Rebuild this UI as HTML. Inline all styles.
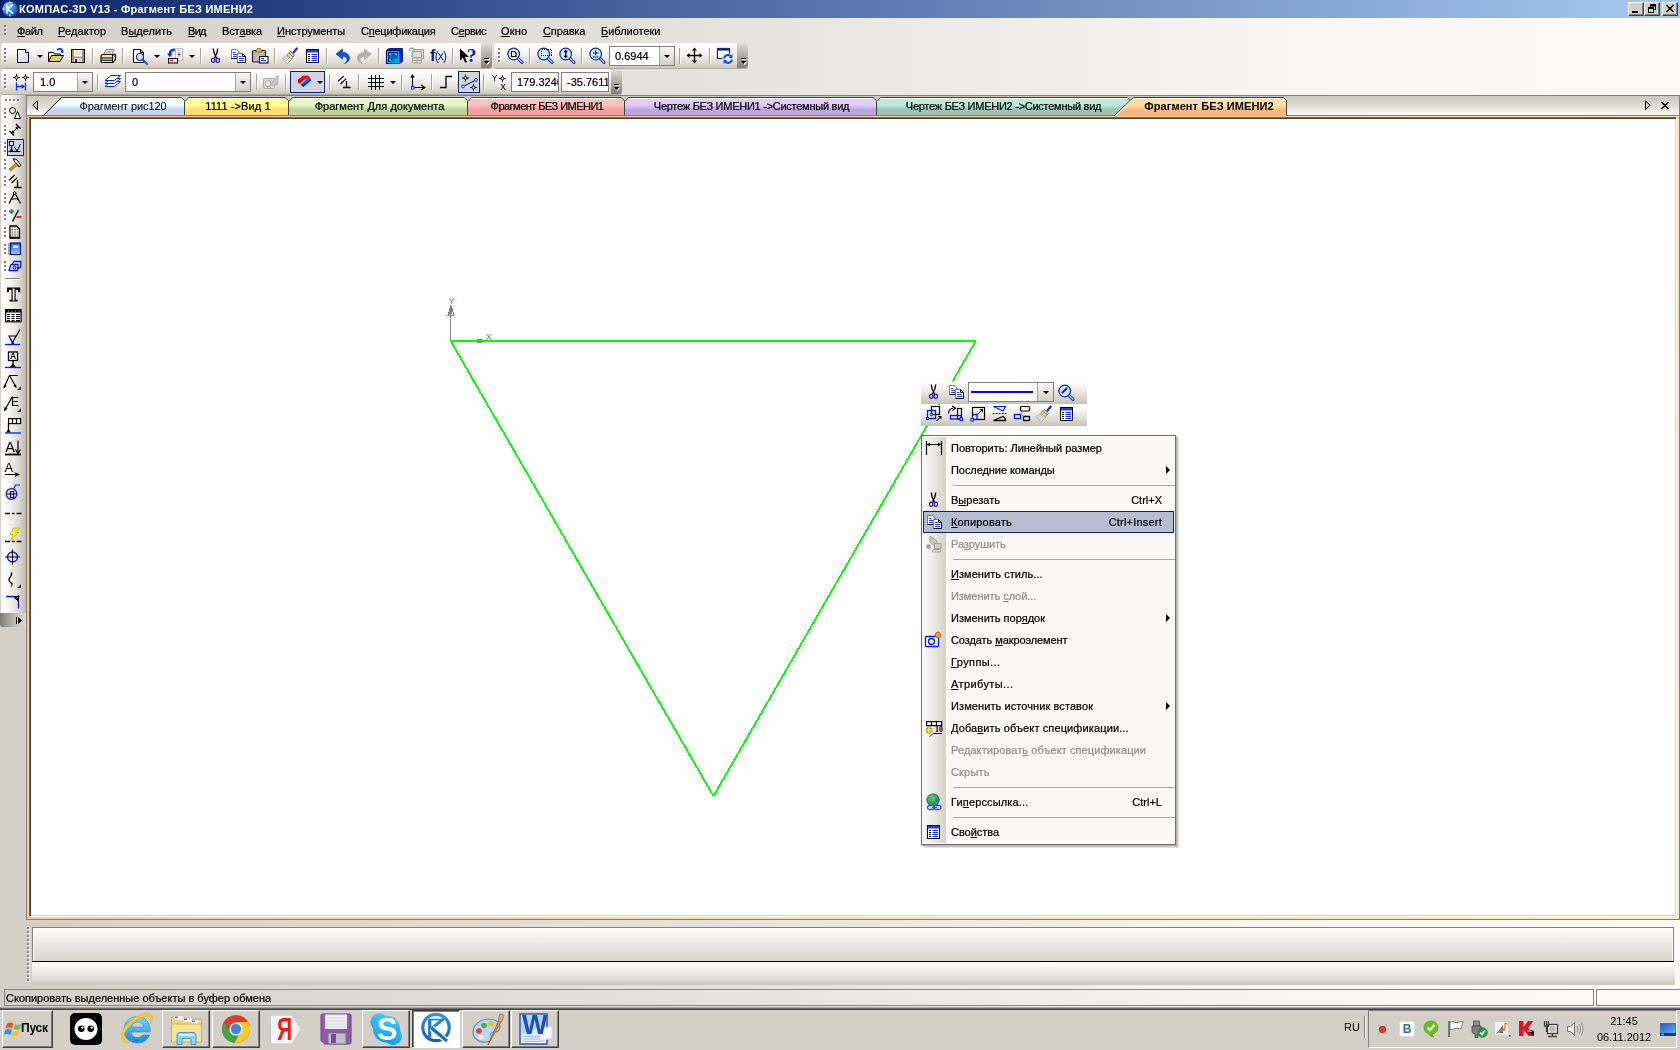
<!DOCTYPE html>
<html lang="ru">
<head>
<meta charset="utf-8">
<title>КОМПАС-3D V13 - Фрагмент БЕЗ ИМЕНИ2</title>
<style>
*{box-sizing:border-box;margin:0;padding:0}
html,body{width:1680px;height:1050px;overflow:hidden;background:#d4d0c8}
body{position:relative;font-family:"Liberation Sans","DejaVu Sans",sans-serif;font-size:11px;color:#000;line-height:13px}
.abs{position:absolute}
.mi,.ci,.ck,.tabt,.cap,.combo span,#stxt,.abs{will-change:transform}
.mi,.ci,.ck,.tabt,.combo span,#stxt{-webkit-text-stroke:.22px currentColor}
svg{position:absolute;overflow:visible;display:block}
u{text-decoration:underline;text-underline-offset:1px}
/* title bar */
#title{position:absolute;left:0;top:0;width:1680px;height:18px;background:linear-gradient(90deg,#0a246a 0%,#a6caf0 100%)}
#title .cap{position:absolute;left:19px;top:2px;color:#fff;font-weight:bold;font-size:11px;line-height:14px;white-space:nowrap;letter-spacing:0.24px}
.tbtn{position:absolute;top:2px;width:16px;height:14px;background:#d4d0c8;border:1px solid;border-color:#fff #404040 #404040 #fff;box-shadow:inset -1px -1px 0 #808080}
/* menubar & toolbar zone */
#zone{position:absolute;left:0;top:18px;width:1680px;height:989px;background:linear-gradient(90deg,#d4d0c8 0%,#e6e4df 45%,#f6f5f3 75%,#fbfaf9 100%)}
.mi{position:absolute;top:25px;font-size:11px;line-height:13px;white-space:nowrap}
.tb{position:absolute;height:25px;box-shadow:0 1px 0 #aca89d;border-radius:3px 3px 3px 3px;background:linear-gradient(180deg,#fff 0%,#fdfdfc 15%,#f3f2ef 45%,#e1ded7 75%,#cdc9bf 100%)}
.tb .ov{position:absolute;right:0;top:0;width:11px;height:25px;border-radius:0 3px 3px 0;background:linear-gradient(180deg,#e0ddd6 0%,#a8a49a 60%,#808080 100%)}
.grip{position:absolute;width:2px}
.sep{position:absolute;width:2px;height:16px;border-left:1px solid #a6a398;border-right:1px solid #fff}
.combo{position:absolute;height:20px;background:#fff;border:1px solid #808080}
.combo span{position:absolute;left:6px;top:3px;font-size:11px;line-height:13px}
.combo i{position:absolute;right:0;top:0;width:15px;height:18px;background:linear-gradient(180deg,#f8f7f5,#d4d0c8);border-left:1px solid #a6a398}
.arr{position:absolute;width:0;height:0;border-left:3px solid transparent;border-right:3px solid transparent;border-top:3px solid #000}
</style>
</head>
<body>
<!-- ===== title bar ===== -->
<div id="title">
<svg style="left:2px;top:1px;width:16px;height:16px" viewBox="0 0 16 16"><defs><radialGradient id="kg" cx="35%" cy="30%" r="75%"><stop offset="0" stop-color="#8fd0ff"/><stop offset="0.6" stop-color="#2c86d8"/><stop offset="1" stop-color="#0f4fa0"/></radialGradient></defs><circle cx="8" cy="8" r="7.6" fill="url(#kg)"/><path d="M5.2 3.5v9M10.8 3.6 5.6 8l5.4 4.6" fill="none" stroke="#fff" stroke-width="1.6"/><path d="M8 0.6v2M8 13.4v2M0.6 8h2" stroke="#fff" stroke-width="1"/></svg>
<div class="cap">КОМПАС-3D V13 - Фрагмент БЕЗ ИМЕНИ2</div>
<div class="tbtn" style="left:1628px"><svg style="left:3px;top:8px;width:6px;height:2px" viewBox="0 0 6 2"><rect width="6" height="2" fill="#000"/></svg></div>
<div class="tbtn" style="left:1644px"><svg style="left:2px;top:1px;width:10px;height:10px" viewBox="0 0 10 10"><path d="M3.5 1h5v4.5M3.5 2h5" fill="none" stroke="#000" stroke-width="1"/><rect x="3" y="0" width="6" height="2" fill="#000"/><rect x="8" y="0" width="1" height="6" fill="#000"/><rect x="3" y="0" width="1" height="3" fill="#000"/><rect x="7" y="5" width="2" height="1" fill="#000"/><rect x="1" y="3" width="6" height="2" fill="#000"/><rect x="1" y="3" width="1" height="6" fill="#000"/><rect x="6" y="3" width="1" height="6" fill="#000"/><rect x="1" y="8" width="6" height="1" fill="#000"/></svg></div>
<div class="tbtn" style="left:1662px"><svg style="left:3px;top:2px;width:8px;height:7px" viewBox="0 0 8 7"><path d="M0.5 0l7 7M7.5 0l-7 7" stroke="#000" stroke-width="1.6" fill="none"/></svg></div>
</div>

<!-- ===== menu / toolbar zone ===== -->
<div id="zone"></div>
<!-- menu grip -->
<svg style="left:4px;top:25px;width:3px;height:11px" viewBox="0 0 3 11"><g fill="#fff"><rect x="1" y="1" width="2" height="2"/><rect x="1" y="5" width="2" height="2"/><rect x="1" y="9" width="2" height="2"/></g><g fill="#808080"><rect x="0" y="0" width="2" height="2"/><rect x="0" y="4" width="2" height="2"/><rect x="0" y="8" width="2" height="2"/></g></svg>
<div class="mi" style="left:17px;letter-spacing:-0.400px"><u>Ф</u>айл</div>
<div class="mi" style="left:58px;letter-spacing:0.112px"><u>Р</u>едактор</div>
<div class="mi" style="left:121px;letter-spacing:0.025px">В<u>ы</u>делить</div>
<div class="mi" style="left:188px;letter-spacing:-0.700px"><u>В</u>ид</div>
<div class="mi" style="left:222px;letter-spacing:-0.129px">Вст<u>а</u>вка</div>
<div class="mi" style="left:277px;letter-spacing:-0.036px"><u>И</u>нструменты</div>
<div class="mi" style="left:361px;letter-spacing:-0.233px">С<u>п</u>ецификация</div>
<div class="mi" style="left:451px;letter-spacing:-0.417px">С<u>е</u>рвис</div>
<div class="mi" style="left:501px;letter-spacing:0.225px"><u>О</u>кно</div>
<div class="mi" style="left:543px;letter-spacing:-0.129px"><u>С</u>правка</div>
<div class="mi" style="left:601px;letter-spacing:-0.010px"><u>Б</u>иблиотеки</div>
<!-- ===== toolbar row 1, bar A ===== -->
<div class="tb" style="left:1px;top:43px;width:491px"><div class="ov"></div></div>
<svg style="left:484px;top:58px;width:7px;height:8px" viewBox="0 0 7 8"><path d="M1 1.5h5" stroke="#fff" stroke-width="1"/><path d="M0 0.5h5" stroke="#000" stroke-width="1"/><path d="M1 4h5l-2.5 3z" fill="#fff"/><path d="M0 3h5l-2.5 3z" fill="#000"/></svg>
<svg class="g4" style="left:4px;top:48px;width:3px;height:15px" viewBox="0 0 3 15"><g fill="#fff"><rect x="1" y="1" width="2" height="2"/><rect x="1" y="5" width="2" height="2"/><rect x="1" y="9" width="2" height="2"/><rect x="1" y="13" width="2" height="2"/></g><g fill="#808080"><rect x="0" y="0" width="2" height="2"/><rect x="0" y="4" width="2" height="2"/><rect x="0" y="8" width="2" height="2"/><rect x="0" y="12" width="2" height="2"/></g></svg>
<!-- new -->
<svg style="left:16px;top:48px;width:16px;height:16px" viewBox="0 0 16 16"><defs><linearGradient id="pg" x1="0" y1="0" x2="1" y2="1"><stop offset="0" stop-color="#fff"/><stop offset="1" stop-color="#c4d4f0"/></linearGradient></defs><path d="M1.5 1.5h8l3 3v10h-11z" fill="url(#pg)" stroke="#000"/><path d="M9.5 1.5v3h3" fill="#fff" stroke="#000"/></svg>
<div class="arr" style="left:37px;top:55px"></div>
<!-- open -->
<svg style="left:48px;top:47px;width:16px;height:16px" viewBox="0 0 16 16"><path d="M0.5 14.5v-9h5l1 1.5h6v2" fill="#f4f0b0" stroke="#000"/><path d="M0.5 14.500l3-6h12l-3.500 6z" fill="#d8d070" stroke="#000"/><path d="M9 3c2.500-2 5-1.500 5.500 1.500" fill="none" stroke="#0030ff" stroke-width="1.800"/><path d="M12.300 3.800h3.600l-1.600 2.800z" fill="#0030ff"/></svg>
<!-- save -->
<svg style="left:70px;top:48px;width:16px;height:16px" viewBox="0 0 16 16"><rect x="1.500" y="1.500" width="13" height="13" fill="#b89048" stroke="#000"/><rect x="4" y="2" width="8" height="6.500" fill="#fff"/><path d="M5 4h6M5 6h6" stroke="#c0c0c0" stroke-width="1"/><rect x="4" y="10" width="8" height="4" fill="#c8d8f0"/><rect x="5" y="11" width="2" height="3" fill="#203040"/></svg>
<div class="sep" style="left:92px;top:48px"></div>
<!-- print -->
<svg style="left:100px;top:48px;width:17px;height:16px" viewBox="0 0 17 16"><path d="M3.500 7l2.500-5.500h7.500l-1.500 5.500z" fill="#fff" stroke="#606060" stroke-width=".8"/><path d="M6.500 3.300h5M6 5h5" stroke="#909090" stroke-width="1"/><path d="M1 8.500c0-1.300 1-2 2.500-2h8.500l3.500 0.500 0 4.500-2.500 3h-11c-.7 0-1-.4-1-1z" fill="#ece8b4" stroke="#000" stroke-width="1.100"/><path d="M12.500 7v7.200M12.500 7l3-1" stroke="#000" stroke-width=".9" fill="none"/><path d="M1.200 10h11.300M1.200 12.200h11.300" stroke="#000" stroke-width="1.100"/><path d="M13.500 9.500l1.500-1.500M13.500 12.500l1.500-1.500" stroke="#707030" stroke-width=".8"/></svg>
<div class="sep" style="left:122px;top:48px"></div>
<!-- preview -->
<svg style="left:132px;top:48px;width:17px;height:17px" viewBox="0 0 17 17"><path d="M1.500 1.500h7l3 3v10h-10z" fill="#fff" stroke="#000"/><path d="M8.500 1.500v3h3" fill="none" stroke="#000"/><circle cx="8" cy="9" r="3.500" fill="#d0e4ff" stroke="#203880" stroke-width="1.200"/><path d="M10.500 11.500l4.500 4.500" stroke="#3050b0" stroke-width="2.200" stroke-linecap="round"/></svg>
<div class="arr" style="left:154px;top:55px"></div>
<!-- print-setup -->
<svg style="left:167px;top:47px;width:17px;height:17px" viewBox="0 0 17 17"><rect x="8.500" y="1.500" width="7" height="12" fill="#f4f4f4" stroke="#808080" stroke-dasharray="1 1"/><path d="M12 3v9" stroke="#808080" stroke-dasharray="1 1"/><path d="M12 6v3M10.500 7.500h3" stroke="#404040" stroke-width=".8"/><path d="M2.800 7.500c0-3.500 2-4.800 5-4.800" fill="none" stroke="#0030ff" stroke-width="2.600"/><path d="M0 6.500h5.600l-2.800 3.800z" fill="#0030ff"/><rect x="1.500" y="11.500" width="9" height="4.500" fill="#e8e8e8" stroke="#000"/><rect x="3" y="12.500" width="3" height="1.500" fill="#ff2020"/></svg>
<div class="arr" style="left:189px;top:55px"></div>
<div class="sep" style="left:200px;top:48px"></div>
<!-- cut -->
<svg style="left:208px;top:48px;width:16px;height:16px" viewBox="0 0 16 16"><path d="M5.300 0.500c0 3.500 1.200 6.500 3.200 9.500M9.700 0.500c0 3.500-1.200 6.500-3.200 9.500" fill="none" stroke="#000" stroke-width="1.300"/><ellipse cx="5.200" cy="12.300" rx="1.700" ry="2.100" fill="none" stroke="#2810a8" stroke-width="1.200"/><ellipse cx="9.800" cy="12.300" rx="1.700" ry="2.100" fill="none" stroke="#2810a8" stroke-width="1.200"/></svg>
<!-- copy -->
<svg style="left:231px;top:49px;width:16px;height:16px" viewBox="0 0 16 16"><path d="M0.500 0.500h5l2.500 2.500v6.500h-7.500z" fill="#fff" stroke="#707070" stroke-width=".9"/><path d="M0.500 9.500h7.500v-6" fill="none" stroke="#000" stroke-width=".9"/><path d="M2 3.500h2.500M2 5.500h4M2 7.500h4" stroke="#0030ff" stroke-width=".9"/><path d="M6.500 4.500h5l3 3v6h-8z" fill="#fff" stroke="#707070" stroke-width=".9"/><path d="M6.500 13.500h8v-6l-3-3v3h3" fill="none" stroke="#000" stroke-width=".9"/><path d="M8 7.500h2.500M8 9.500h5M8 11.500h5" stroke="#0030ff" stroke-width=".9"/></svg>
<!-- paste -->
<svg style="left:252px;top:47px;width:17px;height:17px" viewBox="0 0 17 17"><rect x="0.500" y="3.500" width="13" height="11.500" rx="1" fill="#b4b2ac" stroke="#202020" stroke-width="1.100"/><path d="M2 13.500l10-9M2 9l5-4.500M6 14l6.500-5.500" stroke="#d8d6d0" stroke-width="1"/><path d="M3.500 5l2-3.500h3l2 3.500z" fill="#f0c030" stroke="#805800" stroke-width=".8"/><rect x="7.500" y="9.500" width="8.500" height="6.500" fill="#fff" stroke="#000" stroke-width="1"/><path d="M9 11.500h3M9 13.500h5" stroke="#0030ff" stroke-width="1.100"/></svg>
<div class="sep" style="left:274px;top:48px"></div>
<!-- brush -->
<svg style="left:282px;top:47px;width:17px;height:17px" viewBox="0 0 17 17"><path d="M11.500 5.500l3.300-4" stroke="#2030b0" stroke-width="2.200" stroke-linecap="round"/><path d="M8.500 4.500l4 3.500-1.500 2-4-3.500z" fill="#a8d4fa" stroke="#3858c0" stroke-width=".7"/><path d="M6.500 6l4.500 4-1.700 2.300-4.500-4z" fill="#f6e840" stroke="#807010" stroke-width=".7"/><path d="M4.800 8.300l4.500 4-4 4.500-5-5z" fill="#fff" stroke="#909090" stroke-width=".7"/><path d="M1.500 11l4.500 4.500M2.800 10l4.500 4.500M4 9l4.500 4.500M1.500 13l5-4.500M3 14.500l5-4.500" stroke="#a8a8a8" stroke-width=".6"/></svg>
<!-- properties -->
<svg style="left:305px;top:48px;width:16px;height:16px" viewBox="0 0 16 16"><rect x="1.500" y="1.500" width="12" height="13" fill="#fff" stroke="#000"/><rect x="2" y="2" width="11" height="2.500" fill="#2040d0"/><path d="M3 6.500h2M3 8.500h2M3 10.500h2M3 12.500h2" stroke="#000" stroke-width="1.200"/><path d="M6.500 6.500h5.500M6.500 8.500h5.500M6.500 10.500h5.500M6.500 12.500h5.500" stroke="#0030ff" stroke-width="1.200"/></svg>
<div class="sep" style="left:326px;top:48px"></div>
<!-- undo -->
<svg style="left:335px;top:48px;width:16px;height:16px" viewBox="0 0 16 16"><path d="M1 6l6.500-5v3.200c4 0 7 2.500 7 6 0 2.500-2 4.500-5 5.300 2-1.300 2.500-2.500 2.500-4 0-2-1.500-3.300-4.500-3.300v3z" fill="#1450e0" stroke="#0a30a0" stroke-width=".6"/></svg>
<!-- redo (disabled) -->
<svg style="left:356px;top:48px;width:16px;height:16px" viewBox="0 0 16 16"><path d="M15 6l-6.500-5v3.200c-4 0-7 2.500-7 6 0 2.500 2 4.500 5 5.300-2-1.300-2.500-2.500-2.500-4 0-2 1.500-3.300 4.500-3.300v3z" fill="#b4b2ac" stroke="#a09e98" stroke-width=".6"/></svg>
<div class="sep" style="left:378px;top:48px"></div>
<!-- library manager -->
<svg style="left:386px;top:48px;width:17px;height:16px" viewBox="0 0 17 16"><path d="M0.500 2.500l2.500-2h13.500v13l-3 2z" fill="#0818e0" stroke="#000870" stroke-width=".8"/><rect x="0.500" y="2.500" width="13" height="13" fill="#00e0f8" stroke="#000880" stroke-width="1.100"/><rect x="2.500" y="4.500" width="9" height="3.500" fill="#00e0f8" stroke="#000880" stroke-width="1.100"/><rect x="2.500" y="10" width="9" height="3.500" fill="#00e0f8" stroke="#000880" stroke-width="1.100"/><path d="M5 6.300h4M5 11.800h4" stroke="#000880" stroke-width="1.100"/></svg>
<!-- disabled icon -->
<svg style="left:408px;top:47px;width:17px;height:17px" viewBox="0 0 17 17"><rect x="6.500" y="2.500" width="9" height="9" fill="#d8d6d0" stroke="#a8a6a0"/><rect x="4.500" y="4.500" width="9" height="9" fill="#dcdad4" stroke="#a8a6a0"/><path d="M4.500 10.500h9M4.500 13.500h9M4.500 16h9M4.500 10.500v5.500M9 10.500v5.500M13.500 10.500v5.500" stroke="#a8a6a0" fill="none"/><path d="M1.500 3.500c0-3 4.500-3 4.500-.5 0 1.500-2 1.500-2 3.500M4 8v1.500" fill="none" stroke="#a8a6a0" stroke-width="1.600"/></svg>
<!-- f(x) -->
<div class="abs" style="left:430px;top:47px;width:20px;height:18px;color:#10209c;white-space:nowrap;line-height:18px"><b style="font-size:17px;letter-spacing:-1px">f</b><span style="font-size:12px;letter-spacing:-0.8px;position:relative;top:-1px">(x)</span></div>
<div class="sep" style="left:452px;top:48px"></div>
<!-- help cursor -->
<svg style="left:459px;top:47px;width:18px;height:18px" viewBox="0 0 18 18"><path d="M1 1.500v12l3-2.800 2.200 5 1.800-.8-2.200-4.900h4.200z" fill="#000"/></svg>
<div class="abs" style="left:467px;top:46px;font-size:19px;line-height:20px;font-weight:bold;color:#10209c;font-family:'Liberation Serif',serif">?</div>
<!-- ===== toolbar row 1, bar B (zoom) ===== -->
<div class="tb" style="left:494px;top:43px;width:254px"><div class="ov"></div></div>
<svg style="left:741px;top:58px;width:7px;height:8px" viewBox="0 0 7 8"><path d="M1 1.500h5" stroke="#fff" stroke-width="1"/><path d="M0 0.500h5" stroke="#000" stroke-width="1"/><path d="M1 4h5l-2.500 3z" fill="#fff"/><path d="M0 3h5l-2.500 3z" fill="#000"/></svg>
<svg style="left:498px;top:48px;width:3px;height:15px" viewBox="0 0 3 15"><g fill="#fff"><rect x="1" y="1" width="2" height="2"/><rect x="1" y="5" width="2" height="2"/><rect x="1" y="9" width="2" height="2"/><rect x="1" y="13" width="2" height="2"/></g><g fill="#808080"><rect x="0" y="0" width="2" height="2"/><rect x="0" y="4" width="2" height="2"/><rect x="0" y="8" width="2" height="2"/><rect x="0" y="12" width="2" height="2"/></g></svg>
<!-- zoom window -->
<svg style="left:507px;top:47px;width:17px;height:17px" viewBox="0 0 17 17"><circle cx="6.700" cy="7" r="5.800" fill="#d4ecff" stroke="#1830a0" stroke-width="1.300"/><path d="M11.500 11.800l3.500 3.500" stroke="#2038a0" stroke-width="3.200" stroke-linecap="round"/><path d="M11.500 11.800l3.500 3.500" stroke="#a4c4f0" stroke-width="1.300" stroke-linecap="round"/><path d="M4.500 4.500h3l1.500 1.500v3.500h-4.500z" fill="#fff" stroke="#000" stroke-width="1.200"/></svg>
<div class="sep" style="left:529px;top:48px"></div>
<!-- zoom frame -->
<svg style="left:537px;top:47px;width:17px;height:17px" viewBox="0 0 17 17"><circle cx="6.700" cy="7" r="5.800" fill="#d4ecff" stroke="#1830a0" stroke-width="1.300"/><path d="M11.500 11.800l3.500 3.500" stroke="#2038a0" stroke-width="3.200" stroke-linecap="round"/><path d="M11.500 11.800l3.500 3.500" stroke="#a4c4f0" stroke-width="1.300" stroke-linecap="round"/><rect shape-rendering="crispEdges" x="4.500" y="2.500" width="10" height="6" fill="none" stroke="#000" stroke-dasharray="1 1"/></svg>
<!-- zoom fit -->
<svg style="left:559px;top:47px;width:17px;height:17px" viewBox="0 0 17 17"><circle cx="6.700" cy="7" r="5.800" fill="#d4ecff" stroke="#1830a0" stroke-width="1.300"/><path d="M11.500 11.800l3.500 3.500" stroke="#2038a0" stroke-width="3.200" stroke-linecap="round"/><path d="M11.500 11.800l3.500 3.500" stroke="#a4c4f0" stroke-width="1.300" stroke-linecap="round"/><path d="M6.700 4v6" stroke="#000" stroke-width="1.400"/><path d="M6.700 2.500l2.300 2.800h-4.600zM6.700 11.500l2.300-2.800h-4.600z" fill="#000"/></svg>
<div class="sep" style="left:581px;top:48px"></div>
<!-- zoom +/- -->
<svg style="left:589px;top:47px;width:17px;height:17px" viewBox="0 0 17 17"><circle cx="6.700" cy="7" r="5.800" fill="#d4ecff" stroke="#1830a0" stroke-width="1.300"/><path d="M11.500 11.800l3.500 3.500" stroke="#2038a0" stroke-width="3.200" stroke-linecap="round"/><path d="M11.500 11.800l3.500 3.500" stroke="#a4c4f0" stroke-width="1.300" stroke-linecap="round"/><path d="M4 6h5.500M6.700 3.500v5M4 10h5.500" stroke="#1020a0" stroke-width="1.200"/></svg>
<div class="combo" style="left:609px;top:46px;width:66px"><span style="left:5px">0.6944</span><i></i></div>
<div class="arr" style="left:664px;top:55px"></div>
<div class="sep" style="left:679px;top:48px"></div>
<!-- pan -->
<svg style="left:686px;top:47px;width:17px;height:17px" viewBox="0 0 17 17"><path d="M8.500 2v13M2 8.500h13" stroke="#000" stroke-width="1.300"/><path d="M8.500 0.500l2.500 3h-5zM8.500 16.500l2.500-3h-5zM0.500 8.500l3-2.500v5zM16.500 8.500l-3-2.500v5z" fill="#000"/></svg>
<div class="sep" style="left:709px;top:48px"></div>
<!-- refresh -->
<svg style="left:716px;top:47px;width:18px;height:18px" viewBox="0 0 18 18"><rect x="1.500" y="1.500" width="12" height="10" fill="#fff" stroke="#102880" stroke-width="1.200"/><rect x="1" y="1" width="13" height="2.600" fill="#102880"/><circle cx="12" cy="12" r="5.500" fill="#fff"/><path d="M8 11.500a4 4 0 0 1 7-2" fill="none" stroke="#0848f0" stroke-width="2"/><path d="M16.500 7v4h-4z" fill="#0848f0"/><path d="M16 12.500a4 4 0 0 1-7 2" fill="none" stroke="#0848f0" stroke-width="2"/><path d="M7.500 17v-4h4z" fill="#0848f0"/></svg>

<!-- ===== toolbar row 2 ===== -->
<div class="tb" style="left:1px;top:69px;width:621px"><div class="ov"></div></div>
<svg style="left:614px;top:84px;width:7px;height:8px" viewBox="0 0 7 8"><path d="M1 1.500h5" stroke="#fff" stroke-width="1"/><path d="M0 0.500h5" stroke="#000" stroke-width="1"/><path d="M1 4h5l-2.500 3z" fill="#fff"/><path d="M0 3h5l-2.500 3z" fill="#000"/></svg>
<svg style="left:4px;top:74px;width:3px;height:15px" viewBox="0 0 3 15"><g fill="#fff"><rect x="1" y="1" width="2" height="2"/><rect x="1" y="5" width="2" height="2"/><rect x="1" y="9" width="2" height="2"/><rect x="1" y="13" width="2" height="2"/></g><g fill="#808080"><rect x="0" y="0" width="2" height="2"/><rect x="0" y="4" width="2" height="2"/><rect x="0" y="8" width="2" height="2"/><rect x="0" y="12" width="2" height="2"/></g></svg>
<!-- step icon -->
<svg style="left:12px;top:73px;width:18px;height:18px" viewBox="0 0 18 18"><path d="M4.500 1v7M1 4.500h7M13.500 1v7M10 4.500h7" stroke="#000" stroke-width="1"/><circle cx="4.500" cy="4.500" r="1.500" fill="#fff" stroke="#000"/><circle cx="13.500" cy="4.500" r="1.500" fill="#fff" stroke="#000"/><path d="M4.500 9.500v8M13.500 9.500v8M5 13.500h7" stroke="#0030ff" stroke-width="1.300"/><path d="M13 13.500l-3.500-2.500v5z" fill="#0030ff"/></svg>
<div class="combo" style="left:33px;top:72px;width:60px"><span>1.0</span><i></i></div>
<div class="arr" style="left:82px;top:81px"></div>
<div class="sep" style="left:97px;top:74px"></div>
<!-- layers -->
<svg style="left:104px;top:73px;width:18px;height:18px" viewBox="0 0 18 18"><g fill="#fff" stroke="#0020ff" stroke-width="1" stroke-linejoin="miter"><path d="M7 8.500h9.500l-6 5h-9.500z"/><path d="M7 5.500h9.500l-6 5h-9.500z"/><path d="M7 2.500h9.500l-6 5h-9.500z"/></g></svg>
<div class="combo" style="left:125px;top:72px;width:126px"><span>0</span><i></i></div>
<div class="arr" style="left:240px;top:81px"></div>
<div class="sep" style="left:256px;top:74px"></div>
<!-- disabled -->
<svg style="left:262px;top:73px;width:19px;height:18px" viewBox="0 0 19 18"><rect x="1.500" y="5.500" width="11" height="10" rx="1" fill="#dcdad4" stroke="#b0aea8"/><circle cx="6" cy="10.500" r="3" fill="#e8e6e0" stroke="#b0aea8"/><path d="M8 12l8-10v10z" fill="#c8c6c0" stroke="#b0aea8" stroke-width=".8"/><path d="M5 15l2-2 2 2" fill="none" stroke="#b0aea8"/></svg>
<div class="sep" style="left:285px;top:74px"></div>
<!-- magnet pressed -->
<div class="abs" style="left:290px;top:71px;width:35px;height:22px;background:#d2d6e3;border:1px solid #0a246a"></div>
<svg style="left:296px;top:73px;width:18px;height:18px" viewBox="0 0 18 18"><path d="M2 6.500L7 2.500h4.500l2.500 1.500-2.500 2-2.500 0-5.500 4.500-1.500-1z" fill="#ff1010"/><path d="M2 6.500v2.500l1.500 1v-2z" fill="#a00000"/><path d="M3.500 8.500v2l5.500-4.500v-1.500z" fill="#c00000"/><path d="M14 4l.8 3.500-7.500 6.500-1.800-1.500 0-2 5.500-4.500 0.500-2z" fill="#1060ff"/><path d="M5.500 12.500l1.800 1.500v-2l-1.800-1.500z" fill="#0020a0"/><path d="M7.300 14l7.500-6.500v-2l-7.500 6.500z" fill="#0030c0"/><path d="M7 8l-1 .8M8 8.500l-1 .8" stroke="#fff" stroke-width=".7"/></svg>
<div class="arr" style="left:317px;top:81px"></div>
<div class="sep" style="left:329px;top:74px"></div>
<!-- parallel / perp -->
<svg style="left:336px;top:74px;width:16px;height:16px" viewBox="0 0 16 16"><path d="M2 7.300l5.700-5.300M4.500 10l5.700-5.300" stroke="#000" stroke-width="1.100"/><path d="M10.500 7v6.500M7 13.500h7.500" stroke="#000" stroke-width="1.300"/></svg>
<div class="sep" style="left:358px;top:74px"></div>
<!-- grid -->
<svg style="left:367px;top:73px;width:18px;height:18px" viewBox="0 0 18 18"><path shape-rendering="crispEdges" d="M1 5.500h16M1 9.500h16M1 13.500h16M4.500 2v15M8.500 2v15M12.500 2v15" stroke="#000" stroke-width="1"/></svg>
<div class="arr" style="left:390px;top:81px"></div>
<div class="sep" style="left:401px;top:74px"></div>
<!-- axes -->
<svg style="left:409px;top:73px;width:18px;height:18px" viewBox="0 0 18 18"><path d="M3.500 3v11M4 14.500h11" stroke="#000" stroke-width="1.200"/><path d="M3.500 1l2.300 3.500h-4.600z" fill="#000"/><path d="M12 12l4 2.500-4 2.500" fill="none" stroke="#000" stroke-width="1.100"/><rect x="2.500" y="13.500" width="2.500" height="2.500" fill="#fff" stroke="#0030ff"/></svg>
<div class="sep" style="left:431px;top:74px"></div>
<!-- step line -->
<svg style="left:439px;top:74px;width:16px;height:16px" viewBox="0 0 16 16"><path d="M1 13.500h6v-11h6" fill="none" stroke="#000" stroke-width="1.300"/></svg>
<!-- pressed orth button -->
<div class="abs" style="left:458px;top:71px;width:22px;height:22px;background:#d2d6e3;border:1px solid #0a246a"></div>
<svg style="left:460px;top:73px;width:19px;height:18px" viewBox="0 0 19 18"><path d="M3 13.500l13-6.500" stroke="#000" stroke-width="1"/><circle cx="3" cy="13.500" r="1.400" fill="#fff" stroke="#0030ff"/><circle cx="16" cy="7" r="1.400" fill="#fff" stroke="#0030ff"/><path d="M5.500 1.500v7M2 5h7M13.500 11v7M10 14.500h7" stroke="#000"/><circle cx="5.500" cy="5" r="1.500" fill="#fff" stroke="#000"/><circle cx="13.500" cy="14.500" r="1.500" fill="#fff" stroke="#000"/></svg>
<div class="sep" style="left:483px;top:74px"></div>
<!-- Y X icon -->
<svg style="left:491px;top:74px;width:17px;height:17px" viewBox="491 74 17 17"><g fill="none" stroke="#000" stroke-width="1"><path shape-rendering="crispEdges" d="M499 78.500h7M502.500 75v7"/><circle cx="502.500" cy="78.500" r="1.500" fill="#fff"/></g><text x="494.500" y="81" text-anchor="middle" font-family="Liberation Sans,sans-serif" font-size="8.500" fill="#000">Y</text><text x="503" y="90" text-anchor="middle" font-family="Liberation Sans,sans-serif" font-size="8.500" fill="#000">X</text></svg>
<div class="combo" style="left:511px;top:72px;width:48px;overflow:hidden"><span style="left:5px">179.3246</span></div>
<div class="combo" style="left:561px;top:72px;width:48px;overflow:hidden"><span style="left:5px">-35.7611</span></div>
<!-- ===== document tab bar ===== -->
<style>
#tabbar{position:absolute;left:26px;top:95px;width:1654px;height:21px;border:1px solid #808080;border-bottom-color:#7a7a78;background:linear-gradient(180deg,#cbc7bb 0%,#dcd9d1 45%,#f7f6f3 100%)}
.tabt{position:absolute;top:99px;height:14px;font-size:11px;line-height:14px;text-align:center;white-space:nowrap}
#doc{position:absolute;left:27px;top:116px;width:1652px;height:803px;background:linear-gradient(131deg,#fdba82 0%,#fff2a2 100%)}
#doc .in{position:absolute;left:2px;top:1px;right:2px;bottom:2px;background:#fff;border:1px solid;border-color:#6a6e74 #fff #fff #6a6e74;box-shadow:inset 1px 1px 0 #404040,inset -1px -1px 0 #d4d0c8}
#docb{position:absolute;left:26px;top:919px;width:1654px;height:1px;background:#808080}
#docr{position:absolute;left:1679px;top:116px;width:1px;height:804px;background:#808080}
</style>
<div id="doc"><div class="in"></div></div><div id="docb"></div><div id="docr"></div>
<svg style="left:26px;top:95px;width:1654px;height:24px" viewBox="26 95 1654 24">
<defs><linearGradient id="tbar" x1="0" y1="0" x2="0" y2="1"><stop offset="0" stop-color="#cbc7bb"/><stop offset=".5" stop-color="#dfdcd5"/><stop offset="1" stop-color="#fbfaf8"/></linearGradient><linearGradient id="org" x1="0" y1="0" x2="1" y2="0"><stop offset="0" stop-color="#fdbc84"/><stop offset="1" stop-color="#ffdf9f"/></linearGradient><linearGradient id="tgb" x1="0" y1="0" x2="0" y2="1"><stop offset="0" stop-color="#f0ffff"/><stop offset=".42" stop-color="#f0ffff"/><stop offset=".68" stop-color="#c4d4f0"/><stop offset="1" stop-color="#c4d4f0"/></linearGradient><linearGradient id="tgy" x1="0" y1="0" x2="0" y2="1"><stop offset="0" stop-color="#ffff90"/><stop offset=".42" stop-color="#ffff90"/><stop offset=".68" stop-color="#fedc78"/><stop offset="1" stop-color="#fedc78"/></linearGradient><linearGradient id="tgg" x1="0" y1="0" x2="0" y2="1"><stop offset="0" stop-color="#e6f7c5"/><stop offset=".42" stop-color="#e6f7c5"/><stop offset=".68" stop-color="#bdd09f"/><stop offset="1" stop-color="#bdd09f"/></linearGradient><linearGradient id="tgp" x1="0" y1="0" x2="0" y2="1"><stop offset="0" stop-color="#fdc0c0"/><stop offset=".42" stop-color="#fdc0c0"/><stop offset=".68" stop-color="#f19f9f"/><stop offset="1" stop-color="#f19f9f"/></linearGradient><linearGradient id="tgv" x1="0" y1="0" x2="0" y2="1"><stop offset="0" stop-color="#e2ccfc"/><stop offset=".42" stop-color="#e2ccfc"/><stop offset=".68" stop-color="#bca6e0"/><stop offset="1" stop-color="#bca6e0"/></linearGradient><linearGradient id="tgt" x1="0" y1="0" x2="0" y2="1"><stop offset="0" stop-color="#bdeadc"/><stop offset=".42" stop-color="#bdeadc"/><stop offset=".68" stop-color="#9dc3b7"/><stop offset="1" stop-color="#9dc3b7"/></linearGradient><linearGradient id="tgo" x1="0" y1="0" x2="0" y2="1"><stop offset="0" stop-color="#ffdf9f"/><stop offset=".42" stop-color="#ffdf9f"/><stop offset=".68" stop-color="#f7b681"/><stop offset="1" stop-color="#f7b681"/></linearGradient></defs>
<rect x="27" y="96" width="1652" height="19" fill="url(#tbar)"/>
<path d="M26 95.500H1680" stroke="#808080"/><path d="M1679.500 96V116" stroke="#808080"/>
<path d="M27 115.500H1679" stroke="#808080"/>
<path d="M43.500 115L61.500 97.500H182L184.500 100.500V115z" fill="url(#tgb)"/>
<path d="M61.500 97.500H181.500L184.500 100.500V115" fill="none" stroke="#404040"/>
<path d="M43.500 115.500L61.500 97.500" stroke="#101010" stroke-width="1"/>
<path d="M62 98.500H182" stroke="#fff"/>
<path d="M185 115V101.500L188 98H285.5L288.5 100.500V115z" fill="url(#tgy)"/>
<path d="M185.5 101L188.5 97.500H285L288.5 100.500V115" fill="none" stroke="#404040"/>
<path d="M188 98.500H286" stroke="#fff"/>
<path d="M289 115V101.500L292 98H464.5L467.5 100.500V115z" fill="url(#tgg)"/>
<path d="M289.5 101L292.5 97.500H464L467.5 100.500V115" fill="none" stroke="#404040"/>
<path d="M292 98.500H465" stroke="#fff"/>
<path d="M468 115V101.500L471 98H621.5L624.5 100.500V115z" fill="url(#tgp)"/>
<path d="M468.5 101L471.5 97.500H621L624.5 100.500V115" fill="none" stroke="#404040"/>
<path d="M471 98.500H622" stroke="#fff"/>
<path d="M625 115V101.500L628 98H873.5L876.5 100.500V115z" fill="url(#tgv)"/>
<path d="M625.5 101L628.5 97.500H873L876.5 100.500V115" fill="none" stroke="#404040"/>
<path d="M628 98.500H874" stroke="#fff"/>
<path d="M877 115V101.500L880 98H1127.500L1130 100.500L1115 115z" fill="url(#tgt)"/>
<path d="M877.5 101L880.5 97.500H1127.500L1130.500 100.500" fill="none" stroke="#404040"/>
<path d="M880 98.500H1128" stroke="#fff"/>
<path d="M1114 116.500L1130.500 100L1133.500 97.500H1283.500L1286.500 100.500V116.500z" fill="url(#tgo)"/>
<path d="M1114 116L1130.500 100L1133.500 97.500H1283.500L1286.500 100.500V115.500" fill="none" stroke="#404040"/>
<path d="M1116 115.500L1131.500 100.500" stroke="#fff" stroke-width="1"/>
<path d="M1134 98.500H1284" stroke="#fff"/>
</svg>
<div class="tabt" style="left:185px;width:103px;letter-spacing:0.09px;padding-left:3px">1111 -&gt;Вид 1</div>
<div class="tabt" style="left:288px;width:179px;letter-spacing:0.034px;padding-left:4px">Фрагмент Для документа</div>
<div class="tabt" style="left:467px;width:157px;letter-spacing:-0.53px;padding-left:3px">Фрагмент БЕЗ ИМЕНИ1</div>
<div class="tabt" style="left:624px;width:252px;letter-spacing:-0.26px;padding-left:3px">Чертеж БЕЗ ИМЕНИ1 -&gt;Системный вид</div>
<div class="tabt" style="left:876px;width:254px;letter-spacing:-0.26px;padding-left:1px">Чертеж БЕЗ ИМЕНИ2 -&gt;Системный вид</div>
<div class="abs" style="letter-spacing:-0.113px;left:58px;top:99px;width:130px;text-align:center;font-size:11px;line-height:14px;white-space:nowrap">Фрагмент рис120</div>
<div class="abs" style="letter-spacing:0.095px;left:1132px;top:99px;width:154px;text-align:center;font-size:11px;line-height:14px;font-weight:bold;white-space:nowrap">Фрагмент БЕЗ ИМЕНИ2</div>
<!-- scroll arrows / close -->
<svg style="left:32px;top:100px;width:7px;height:11px" viewBox="0 0 7 11"><path d="M5.500 0.800v9L1 5.300z" fill="none" stroke="#000" stroke-width="1"/></svg>
<svg style="left:1644px;top:100px;width:7px;height:11px" viewBox="0 0 7 11"><path d="M1.500 0.800v9L6 5.300z" fill="none" stroke="#000" stroke-width="1"/></svg>
<svg style="left:1661px;top:102px;width:8px;height:7px" viewBox="0 0 8 7"><path d="M0.500 0l7 7M7.500 0l-7 7" stroke="#000" stroke-width="1.500" fill="none"/></svg>
<!-- ===== left vertical toolbar ===== -->
<div class="abs" style="left:26px;top:96px;width:1px;height:824px;background:#808080"></div>
<div class="abs" style="left:1px;top:95px;width:25px;height:519px;border-radius:3px 0 0 0;background:linear-gradient(90deg,#fff 0%,#fbfaf9 20%,#eeede9 45%,#d9d6ce 75%,#bcb8ac 100%)"></div>
<div class="abs" style="left:0px;top:613px;width:26px;height:14px;border-radius:0 0 0 3px;background:linear-gradient(90deg,#7c7a76 0%,#a09e98 30%,#cfccc4 75%,#dcd9d2 100%)"></div>
<svg style="left:16px;top:617px;width:7px;height:7px" viewBox="0 0 7 7"><path d="M0.500 0v7" stroke="#000"/><path d="M2 0l4 3.500-4 3.500z" fill="#000"/><path d="M1.500 1v6" stroke="#fff" opacity=".6"/></svg>
<svg style="left:5px;top:99px;width:15px;height:3px" viewBox="0 0 15 3"><g fill="#fff"><rect x="1" y="1" width="2" height="2"/><rect x="5" y="1" width="2" height="2"/><rect x="9" y="1" width="2" height="2"/><rect x="13" y="1" width="2" height="2"/></g><g fill="#808080"><rect x="0" y="0" width="2" height="2"/><rect x="4" y="0" width="2" height="2"/><rect x="8" y="0" width="2" height="2"/><rect x="12" y="0" width="2" height="2"/></g></svg>
<!-- small grips for the first 10 icons -->
<svg style="left:4px;top:108px;width:3px;height:170px" viewBox="0 0 3 170"><g fill="#808080">
<rect y="0" width="2" height="2"/><rect y="4" width="2" height="2"/><rect y="8" width="2" height="2"/>
<rect y="17" width="2" height="2"/><rect y="21" width="2" height="2"/><rect y="25" width="2" height="2"/>
<rect y="34" width="2" height="2"/><rect y="38" width="2" height="2"/><rect y="42" width="2" height="2"/>
<rect y="51" width="2" height="2"/><rect y="55" width="2" height="2"/><rect y="59" width="2" height="2"/>
<rect y="68" width="2" height="2"/><rect y="72" width="2" height="2"/><rect y="76" width="2" height="2"/>
<rect y="85" width="2" height="2"/><rect y="89" width="2" height="2"/><rect y="93" width="2" height="2"/>
<rect y="102" width="2" height="2"/><rect y="106" width="2" height="2"/><rect y="110" width="2" height="2"/>
<rect y="119" width="2" height="2"/><rect y="123" width="2" height="2"/><rect y="127" width="2" height="2"/>
<rect y="136" width="2" height="2"/><rect y="140" width="2" height="2"/><rect y="144" width="2" height="2"/>
<rect y="153" width="2" height="2"/><rect y="157" width="2" height="2"/><rect y="161" width="2" height="2"/>
</g></svg>
<!-- 1 geometry -->
<svg style="left:8px;top:106px;width:14px;height:14px" viewBox="0 0 14 14"><circle cx="4.500" cy="4.500" r="3" fill="none" stroke="#000" stroke-width="1"/><path d="M6.500 12.500h6l-3-7z" fill="#fff" stroke="#000" stroke-width="1"/></svg>
<!-- 2 dimensions -->
<svg style="left:8px;top:123px;width:14px;height:14px" viewBox="0 0 14 14"><path d="M3.500 10.500l7-7" stroke="#000" stroke-width="1"/><path d="M1.500 8l4.500 4.500M8 1l4.500 4.500" stroke="#000" stroke-width="1.100"/><path d="M3.300 10.700l3.400-.8-2.600-2.600zM10.700 3.300l-3.400.8 2.600 2.600z" fill="#000"/></svg>
<!-- 3 designations (pressed) -->
<div class="abs" style="left:7px;top:139px;width:17px;height:17px;background:#d2d6e3;border:1px solid #0a246a"></div>
<svg style="left:8px;top:140px;width:15px;height:15px" viewBox="0 0 15 15"><path d="M0.500 11.500h12" stroke="#000" stroke-width="1.200"/><rect x="1.500" y="1.500" width="4" height="4" fill="#fff" stroke="#0018a0" stroke-width="1.200"/><path d="M3.500 6v5" stroke="#0018a0" stroke-width="1.400"/><path d="M1.500 11l2-2.500 2 2.500z" fill="#0018a0"/><path d="M6.500 7l2.500 4 3.500-7" fill="none" stroke="#000" stroke-width="1"/></svg>
<!-- 4 edit (hammer) -->
<svg style="left:8px;top:157px;width:15px;height:15px" viewBox="0 0 15 15"><path d="M1 12l7-6 1.800 2-7 6z" fill="#d89018" stroke="#805000" stroke-width=".6"/><path d="M5 1.500l3.500 1 4.500 5.500-2 2-1.500-2.500-3-3z" fill="#e8e8e8" stroke="#000" stroke-width="1"/></svg>
<!-- 5 parametrization -->
<svg style="left:8px;top:174px;width:15px;height:15px" viewBox="0 0 15 15"><path d="M1 6.300l5.700-5.300M3.500 9l5.700-5.300" stroke="#000" stroke-width="1.100"/><path d="M9.500 6v7M6 13.500h7.500" stroke="#000" stroke-width="1.300"/></svg>
<!-- 6 measure (compass) -->
<svg style="left:8px;top:191px;width:15px;height:15px" viewBox="0 0 15 15"><path d="M1 12.500l5.500-10.500M12.500 12.500l-5.500-10.500" stroke="#000" stroke-width="1.300"/><circle cx="6.700" cy="2" r="1.300" fill="#fff" stroke="#000"/><path d="M3.500 8.500c2-1 4.500-1 6.500 0" fill="none" stroke="#000"/></svg>
<!-- 7 select +/- -->
<svg style="left:8px;top:208px;width:15px;height:15px" viewBox="0 0 15 15"><path d="M4.500 13.500l6-11.500" stroke="#000" stroke-width="1.400"/><path d="M1 3.500h5M3.500 1v5" stroke="#10a830" stroke-width="1.800"/><path d="M8.500 9h5" stroke="#f01010" stroke-width="1.800"/></svg>
<!-- 8 spec -->
<svg style="left:9px;top:225px;width:12px;height:14px" viewBox="0 0 12 14"><path d="M1 1h6.500l3 3v9h-9.500z" fill="#fff" stroke="#000" stroke-width="1.300"/><path d="M3.500 2v10M6 2v10M8.500 4v8M1.500 4.500h9M1.500 7h9M1.500 9.500h9" stroke="#606060" stroke-width=".8" stroke-dasharray="1 .6"/><path d="M1 12.500h9.500" stroke="#000" stroke-width="1.600"/></svg>
<!-- 9 reports (blue) -->
<svg style="left:8px;top:242px;width:14px;height:14px" viewBox="0 0 14 14"><defs><linearGradient id="bl9" x1="0" y1="0" x2="0" y2="1"><stop offset="0" stop-color="#2858d8"/><stop offset="1" stop-color="#a8c8ff"/></linearGradient></defs><rect x="2.500" y="1" width="10" height="11.500" fill="url(#bl9)" stroke="#0820a0" stroke-width="1.200"/><path d="M1 1.500v11" stroke="#000" stroke-dasharray="1 1" stroke-width="1.200"/><rect x="5" y="3.500" width="5.500" height="2.500" fill="#e8f0ff"/></svg>
<!-- 10 blue views -->
<svg style="left:8px;top:259px;width:15px;height:14px" viewBox="0 0 15 14"><path d="M1 11.500l2-6h7l-0.500 6z" fill="#fff" stroke="#0018ff" stroke-width="1.300" stroke-linejoin="round"/><path d="M4 5.500l2-3h7l-0.500 6-3 .5" fill="none" stroke="#0018ff" stroke-width="1.300" stroke-linejoin="round"/><circle cx="6.500" cy="8.500" r="1.500" fill="none" stroke="#0018ff" stroke-width="1.200"/></svg>
<!-- separator -->
<div class="abs" style="left:5px;top:278px;width:15px;height:2px;border-top:1px solid #808080;border-bottom:1px solid #fff"></div>
<!-- T -->
<svg style="left:6px;top:287px;width:15px;height:15px" viewBox="0 0 15 15"><text x="7.500" y="13.500" text-anchor="middle" font-family="Liberation Serif,serif" font-weight="bold" font-size="19" fill="#fff" stroke="#000" stroke-width="1.200">T</text></svg>
<!-- table -->
<svg style="left:5px;top:309px;width:17px;height:14px" viewBox="0 0 17 14"><rect x="0.600" y="0.600" width="15.500" height="12.200" fill="#fff" stroke="#000" stroke-width="1.200"/><rect x="1" y="1" width="15" height="2.500" fill="#000"/><path d="M2 5.500h3M6.500 5.500h3M11 5.500h4M2 7.500h3M6.500 7.500h3M11 7.500h4M2 9.500h3M6.500 9.500h3M11 9.500h4M2 11.500h3M6.500 11.500h3M11 11.500h4" stroke="#000" stroke-width="1"/><path d="M3 2h1M6.500 2h1M10 2h1M13.500 2h1" stroke="#fff" stroke-width=".8"/></svg>
<!-- roughness -->
<svg style="left:5px;top:329px;width:17px;height:17px" viewBox="0 0 17 17"><path d="M4 7h7l-3.500 6.500zM7.500 13.500l7.500-13" fill="none" stroke="#000" stroke-width="1.100"/><path d="M0 15.500h15" stroke="#0018ff" stroke-width="1.300"/><path d="M6.500 13.500h2.500v1.500h-2.500z" fill="#000"/></svg>
<!-- base A -->
<svg style="left:5px;top:351px;width:17px;height:18px" viewBox="0 0 17 18"><rect x="3.500" y="1" width="9" height="8.500" fill="#fff" stroke="#000" stroke-width="1.300"/><text x="8" y="8.300" text-anchor="middle" font-family="Liberation Sans,sans-serif" font-size="8.500" font-weight="bold" fill="#000">A</text><path d="M8 10v4" stroke="#000" stroke-width="1.300"/><path d="M5 16l3-3.500 3 3.500z" fill="#000"/><path d="M0 16.500h16" stroke="#0018ff" stroke-width="1.300"/></svg>
<!-- leader -->
<svg style="left:3px;top:374px;width:19px;height:17px" viewBox="0 0 19 17"><path d="M6.500 1.500h8.500M6.500 1.500l-5.500 12M6.500 1.500l6.500 11.500" fill="none" stroke="#000" stroke-width="1.100"/><path d="M0.500 14.500l0.500-4 2.800 1.500zM13.500 14l-3.300-2.300 2.800-1.500z" fill="#000"/><path d="M18 12v4h-4z" fill="#404040"/></svg>
<!-- brand E -->
<svg style="left:3px;top:395px;width:19px;height:18px" viewBox="0 0 19 18"><path d="M9.500 1.500l-7.500 13" stroke="#000" stroke-width="1.200"/><path d="M1 16.500l0.500-4.500 3 1.800z" fill="#000"/><text x="8" y="10.800" font-family="Liberation Sans,sans-serif" font-size="13" fill="#000" textLength="8" lengthAdjust="spacingAndGlyphs">E</text><path d="M18 13v4h-4z" fill="#404040"/></svg>
<!-- position table -->
<svg style="left:5px;top:417px;width:17px;height:18px" viewBox="0 0 17 18"><rect x="3.600" y="1.600" width="12" height="5" fill="#fff" stroke="#000" stroke-width="1.200"/><path d="M7.500 1.500v5M11.500 1.500v5" stroke="#000" stroke-width="1.200"/><path d="M3.500 6v8" stroke="#000" stroke-width="1.300"/><path d="M1 15.500l2.500-3.500 2.500 3.500z" fill="#000"/><path d="M0 16h16" stroke="#0018ff" stroke-width="1.300"/></svg>
<!-- A down arrow -->
<svg style="left:5px;top:440px;width:17px;height:16px" viewBox="0 0 17 16"><text x="5" y="11.500" text-anchor="middle" font-family="Liberation Sans,sans-serif" font-size="14.500" fill="#000">A</text><path d="M13 0.500v12" stroke="#000" stroke-width="1.200"/><path d="M10.500 9.500l2.500 4 2.500-4" fill="none" stroke="#000" stroke-width="1.200"/><path d="M0 14.500h16" stroke="#000" stroke-width="1.800"/></svg>
<!-- A right arrow -->
<svg style="left:5px;top:461px;width:17px;height:17px" viewBox="0 0 17 17"><text x="3.700" y="10.800" text-anchor="middle" font-family="Liberation Sans,sans-serif" font-size="13" fill="#000">A</text><path d="M0 13.500h14" stroke="#000" stroke-width="1.100"/><path d="M9.500 11l5.500 2.500-5.500 2.500 1.500-2.500z" fill="#000"/></svg>
<!-- blue circle -->
<svg style="left:5px;top:483px;width:17px;height:18px" viewBox="0 0 17 18"><circle cx="6.500" cy="11" r="5.300" fill="none" stroke="#0018ff" stroke-width="1.300"/><path d="M8.500 6l2-4h4.500" fill="none" stroke="#0018ff" stroke-width="1.200"/><path d="M1.500 11h10M5.500 8.500v6h3v-6z" fill="none" stroke="#000" stroke-width="1.200"/></svg>
<!-- dash-dot line -->
<svg style="left:5px;top:512px;width:17px;height:3px" viewBox="0 0 17 3"><path d="M0 1.500h5M7 1.500h2.500M11.500 1.500h5" stroke="#000" stroke-width="1.300"/></svg>
<!-- lightning -->
<svg style="left:5px;top:526px;width:17px;height:18px" viewBox="0 0 17 18"><path d="M8.500 2l6.500 0-4 4.500 3 0-9 8.500 3-6.500-3 0z" fill="#f4ec20" stroke="#b0a810" stroke-width=".6"/><path d="M0 15.500h5M7 15.500h2.500M11.500 15.500h5" stroke="#000" stroke-width="1.300"/></svg>
<!-- crosshair circle -->
<svg style="left:5px;top:549px;width:16px;height:16px" viewBox="0 0 16 16"><circle cx="7.500" cy="8" r="5" fill="none" stroke="#0018ff" stroke-width="1.400"/><path d="M7.500 0.500v15M0 8h15" stroke="#000" stroke-width="1.100"/></svg>
<!-- wave -->
<svg style="left:7px;top:571px;width:15px;height:18px" viewBox="0 0 15 18"><path d="M4 1.500c3 2.500-3 5-2 8s5 2 2 6" fill="none" stroke="#000" stroke-width="1.200"/><path d="M14 13v4h-4z" fill="#404040"/></svg>
<!-- fillet -->
<svg style="left:5px;top:594px;width:16px;height:16px" viewBox="0 0 16 16"><path d="M1 2.500h7c3.500 0 5.500 2.500 5.500 6v6" fill="none" stroke="#0018ff" stroke-width="1.300"/><path d="M9 2.500h5.500M13.500 1v7M9 3l4.500 4" stroke="#000" stroke-width="1.100" fill="none"/></svg>
<!-- ===== drawing canvas content ===== -->
<svg style="left:31px;top:119px;width:1643px;height:795px" viewBox="31 119 1643 795">
<g shape-rendering="crispEdges" fill="none" stroke="#00ff00" stroke-width="2">
<path d="M450 341H976"/>
<path d="M975.500 341.500L713.500 796L451 341.500" stroke-width="1.800" stroke-linejoin="bevel"/>
</g>
<g shape-rendering="crispEdges" stroke="#808080" fill="none" stroke-width="1">
<path d="M450.500 305V340"/>
<path d="M450.500 306l-2.500 9.500h6l-2.500-9.500M449.500 308v6M451.500 308v6"/>
<path d="M477.500 339.500h4v3h-4zM481 341.500h3"/>
</g>
<text x="448.500" y="304" font-family="Liberation Sans,sans-serif" font-size="9.500" fill="#808080">Y</text>
<text x="485.500" y="339.500" font-family="Liberation Sans,sans-serif" font-size="9.500" fill="#808080">X</text>
</svg>
<!-- ===== mini toolbar ===== -->
<style>
.mt{position:absolute;left:921px;width:166px;background:linear-gradient(180deg,#fff 0%,#f6f5f2 25%,#dcd9d1 70%,#c6c2b6 100%)}
#cm{position:absolute;left:921px;top:435px;width:255px;height:410px;background:#f9f8f7;border:1px solid #6e6d68;box-shadow:inset 0 0 0 1px #fff,1px 1px 0 #b4b2ae,2px 2px 0 #cac9c6,3px 3px 0 #e2e1df}
#cm .strip{position:absolute;left:1px;top:1px;width:23px;height:406px;background:linear-gradient(90deg,#f9f8f7 0%,#f0eeea 35%,#d6d2ca 100%)}
.ci{position:absolute;left:951px;height:22px;line-height:22px;font-size:11px;white-space:nowrap}
.ck{position:absolute;left:1062px;width:100px;text-align:right;height:22px;line-height:22px;font-size:11px;white-space:nowrap}
.dis{color:#8d8d8d}
.cs{position:absolute;left:953px;width:222px;height:1px;background:#a6a6a6}
.sub{position:absolute;left:1166px;width:0;height:0;border-top:4px solid transparent;border-bottom:4px solid transparent;border-left:4px solid #000}
</style>
<div class="mt" style="top:381px;height:23px"></div>
<div class="mt" style="top:405px;height:21px"></div>
<!-- cut -->
<svg style="left:926px;top:384px;width:16px;height:16px" viewBox="0 0 16 16"><path d="M5.300 0.500c0 3.500 1.200 6.500 3.200 9.500M9.700 0.500c0 3.500-1.200 6.500-3.200 9.500" fill="none" stroke="#000" stroke-width="1.300"/><ellipse cx="5.200" cy="12.300" rx="1.700" ry="2.100" fill="none" stroke="#2810a8" stroke-width="1.200"/><ellipse cx="9.800" cy="12.300" rx="1.700" ry="2.100" fill="none" stroke="#2810a8" stroke-width="1.200"/></svg>
<!-- copy -->
<svg style="left:949px;top:385px;width:16px;height:16px" viewBox="0 0 16 16"><path d="M0.500 0.500h5l2.500 2.500v6.500h-7.500z" fill="#fff" stroke="#707070" stroke-width=".9"/><path d="M0.500 9.500h7.500v-6" fill="none" stroke="#000" stroke-width=".9"/><path d="M2 3.500h2.500M2 5.500h4M2 7.500h4" stroke="#0030ff" stroke-width=".9"/><path d="M6.500 4.500h5l3 3v6h-8z" fill="#fff" stroke="#707070" stroke-width=".9"/><path d="M6.500 13.500h8v-6l-3-3v3h3" fill="none" stroke="#000" stroke-width=".9"/><path d="M8 7.500h2.500M8 9.500h5M8 11.500h5" stroke="#0030ff" stroke-width=".9"/></svg>
<div class="combo" style="left:968px;top:382px;width:86px"><i style="width:16px"></i></div>
<div class="abs" style="left:971px;top:391px;width:62px;height:2px;background:#0000ff"></div>
<div class="arr" style="left:1043px;top:391px"></div>
<!-- style zoom -->
<svg style="left:1058px;top:384px;width:17px;height:17px" viewBox="0 0 17 17"><circle cx="6.700" cy="7" r="5.800" fill="#d4ecff" stroke="#1830a0" stroke-width="1.300"/><path d="M11.500 11.800l3.500 3.500" stroke="#2038a0" stroke-width="3.200" stroke-linecap="round"/><path d="M11.500 11.800l3.500 3.500" stroke="#a4c4f0" stroke-width="1.300" stroke-linecap="round"/><path d="M4.500 8.500l4-4" stroke="#1020e0" stroke-width="2.200" stroke-linecap="round"/></svg>
<!-- row2: move -->
<svg style="left:925px;top:405px;width:18px;height:18px" viewBox="0 0 18 18"><rect x="6.500" y="1.500" width="8" height="8" fill="none" stroke="#000" stroke-width="1.200"/><rect x="2.500" y="5.500" width="8" height="8" fill="none" stroke="#0018ff" stroke-width="1.300"/><circle cx="6.500" cy="9.500" r="1.300" fill="#fff" stroke="#000"/><rect x="1.500" y="12.500" width="2" height="2" fill="#fff" stroke="#0018ff"/><path d="M11.500 16l4-4" stroke="#000" stroke-width="1"/><path d="M16.500 11v3.500l-3.500-3.500z" fill="#000"/></svg>
<!-- rotate -->
<svg style="left:947px;top:405px;width:18px;height:18px" viewBox="0 0 18 18"><rect x="10.500" y="3.500" width="4" height="10.500" fill="none" stroke="#000" stroke-width="1.200"/><rect x="3.500" y="10.500" width="10.500" height="3.500" fill="none" stroke="#0018ff" stroke-width="1.300"/><rect x="13" y="13" width="2.500" height="2.500" fill="#fff" stroke="#0018ff"/><path d="M1.500 8.500c0-3 2-5 5-5.500" fill="none" stroke="#000" stroke-width="1.200"/><path d="M5 1l3.500 2-3 2.500" fill="none" stroke="#000" stroke-width="1.200"/></svg>
<!-- scale -->
<svg style="left:969px;top:405px;width:18px;height:18px" viewBox="0 0 18 18"><rect x="3.500" y="2.500" width="12" height="12" fill="none" stroke="#000" stroke-width="1.200"/><path d="M3.500 9.500h4.500v5" fill="none" stroke="#0018ff" stroke-width="1.300"/><rect x="2" y="13.500" width="2.500" height="2.500" fill="#fff" stroke="#0018ff"/><path d="M8.500 9.500l4.500-4.500" stroke="#000"/><path d="M14 4v3.500l-3.500-3.500z" fill="#000"/></svg>
<!-- mirror -->
<svg style="left:992px;top:405px;width:17px;height:18px" viewBox="0 0 17 18"><path d="M1.500 1.500h12l-2.500 4.500z" fill="none" stroke="#0018ff" stroke-width="1.200"/><path d="M0.500 8.500h14" stroke="#0018ff" stroke-width="1.200" stroke-dasharray="2 1"/><path d="M1.500 15.500h12c0-2-1-3.500-2.500-4z" fill="none" stroke="#000" stroke-width="1.300"/></svg>
<!-- copy along -->
<svg style="left:1013px;top:405px;width:18px;height:18px" viewBox="0 0 18 18"><rect x="7.500" y="1.500" width="9" height="4.500" rx="1" fill="#fff" stroke="#000" stroke-width="1.200"/><rect x="10.500" y="11.500" width="6" height="4" rx=".5" fill="#e8e8e8" stroke="#000" stroke-width="1.300"/><rect x="1.500" y="9.500" width="6" height="4" fill="#f0f0e0" stroke="#0018ff" stroke-width="1.300"/><path d="M9.500 7l-1.500 2.500M9 10l2 2" stroke="#606060" stroke-width=".8"/></svg>
<!-- brush -->
<svg style="left:1036px;top:405px;width:17px;height:17px" viewBox="0 0 17 17"><path d="M11.500 5.500l3.300-4" stroke="#2030b0" stroke-width="2.200" stroke-linecap="round"/><path d="M8.500 4.500l4 3.500-1.500 2-4-3.500z" fill="#a8d4fa" stroke="#3858c0" stroke-width=".7"/><path d="M6.500 6l4.500 4-1.700 2.300-4.500-4z" fill="#f6e840" stroke="#807010" stroke-width=".7"/><path d="M4.800 8.300l4.500 4-4 4.500-5-5z" fill="#fff" stroke="#909090" stroke-width=".7"/><path d="M1.500 11l4.500 4.500M2.800 10l4.500 4.500M4 9l4.500 4.500M1.500 13l5-4.500M3 14.500l5-4.500" stroke="#a8a8a8" stroke-width=".6"/></svg>
<!-- properties -->
<svg style="left:1059px;top:406px;width:16px;height:16px" viewBox="0 0 16 16"><rect x="1.500" y="1.500" width="12" height="13" fill="#fff" stroke="#000"/><rect x="2" y="2" width="11" height="2.500" fill="#2040d0"/><path d="M3 6.500h2M3 8.500h2M3 10.500h2M3 12.500h2" stroke="#000" stroke-width="1.200"/><path d="M6.500 6.500h5.500M6.500 8.500h5.500M6.500 10.500h5.500M6.500 12.500h5.500" stroke="#0030ff" stroke-width="1.200"/></svg>

<!-- ===== context menu ===== -->
<div id="cm"><div class="strip"></div></div>
<div class="abs" style="left:923px;top:511px;width:251px;height:22px;background:#b6bdd2;border:1px solid #0a246a"></div>
<div class="ci" style="letter-spacing:-0.027px;top:437px">Повторить: Линейный размер</div>
<div class="ci" style="letter-spacing:-0.065px;top:459px">Последние команды</div><div class="sub" style="top:466px"></div>
<div class="cs" style="top:485px"></div>
<div class="ci" style="letter-spacing:0.013px;top:489px">В<u>ы</u>резать</div><div class="ck" style="top:489px">Ctrl+X</div>
<div class="ci" style="letter-spacing:0.170px;top:511px"><u>К</u>опировать</div><div class="ck" style="top:511px;letter-spacing:.21px">Ctrl+Insert</div>
<div class="ci dis" style="letter-spacing:-0.056px;top:533px">Ра<u>з</u>рушить</div>
<div class="cs" style="top:559px"></div>
<div class="ci" style="letter-spacing:0.059px;top:563px"><u>И</u>зменить стиль...</div>
<div class="ci dis" style="letter-spacing:-0.056px;top:585px">Изменить <u>с</u>лой...</div>
<div class="ci" style="letter-spacing:-0.006px;top:607px">Изменить пор<u>я</u>док</div><div class="sub" style="top:614px"></div>
<div class="ci" style="letter-spacing:-0.090px;top:629px">Создать <u>м</u>акроэлемент</div>
<div class="ci" style="letter-spacing:0.411px;top:651px"><u>Г</u>руппы...</div>
<div class="ci" style="letter-spacing:0.400px;top:673px"><u>А</u>трибуты...</div>
<div class="ci" style="letter-spacing:0.088px;top:695px">Изменить источник вставок</div><div class="sub" style="top:702px"></div>
<div class="ci" style="letter-spacing:0.123px;top:717px">Доба<u>в</u>ить объект спецификации...</div>
<div class="ci dis" style="letter-spacing:0.088px;top:739px">Редактироват<u>ь</u> объект спецификации</div>
<div class="ci dis" style="letter-spacing:0.167px;top:761px">Скрыть</div>
<div class="cs" style="top:787px"></div>
<div class="ci" style="letter-spacing:0.143px;top:791px">Ги<u>п</u>ерссылка...</div><div class="ck" style="top:791px">Ctrl+L</div>
<div class="cs" style="top:817px"></div>
<div class="ci" style="letter-spacing:-0.037px;top:821px">Сво<u>й</u>ства</div>
<!-- menu icons -->
<svg style="left:925px;top:440px;width:18px;height:16px" viewBox="0 0 18 16"><path d="M1.500 1v14M16.500 1v14M2 4.500h14" stroke="#000" stroke-width="1.200"/><path d="M2 4.500l3-2v4zM16 4.500l-3-2v4z" fill="#000"/></svg>
<svg style="left:926px;top:492px;width:16px;height:16px" viewBox="0 0 16 16"><path d="M5.300 0.500c0 3.500 1.200 6.500 3.200 9.500M9.700 0.500c0 3.500-1.200 6.500-3.200 9.500" fill="none" stroke="#000" stroke-width="1.300"/><ellipse cx="5.200" cy="12.300" rx="1.700" ry="2.100" fill="none" stroke="#2810a8" stroke-width="1.200"/><ellipse cx="9.800" cy="12.300" rx="1.700" ry="2.100" fill="none" stroke="#2810a8" stroke-width="1.200"/></svg>
<svg style="left:927px;top:515px;width:16px;height:16px" viewBox="0 0 16 16"><path d="M0.500 0.500h5l2.500 2.500v6.500h-7.500z" fill="#fff" stroke="#707070" stroke-width=".9"/><path d="M0.500 9.500h7.500v-6" fill="none" stroke="#000" stroke-width=".9"/><path d="M2 3.500h2.500M2 5.500h4M2 7.500h4" stroke="#0030ff" stroke-width=".9"/><path d="M6.500 4.500h5l3 3v6h-8z" fill="#fff" stroke="#707070" stroke-width=".9"/><path d="M6.500 13.500h8v-6l-3-3v3h3" fill="none" stroke="#000" stroke-width=".9"/><path d="M8 7.500h2.500M8 9.500h5M8 11.500h5" stroke="#0030ff" stroke-width=".9"/></svg>
<svg style="left:925px;top:535px;width:18px;height:18px" viewBox="0 0 18 18"><path d="M5 1l7 5v7M5 1v6l7 6" fill="#c8c6c0" stroke="#a0a09a" stroke-width="1"/><circle cx="3.500" cy="11.500" r="2.300" fill="#a0a09a"/><rect x="9.500" y="8.500" width="6.500" height="5" fill="#d0cec8" stroke="#a0a09a"/><rect x="7.500" y="14.500" width="8" height="2.500" rx="1" fill="#e0ded8" stroke="#a0a09a"/></svg>
<svg style="left:924px;top:631px;width:20px;height:18px" viewBox="0 0 20 18"><rect x="1.500" y="5.500" width="13" height="10" rx="1" fill="#fff" stroke="#0018ff" stroke-width="1.300"/><circle cx="7.500" cy="10.500" r="3" fill="none" stroke="#0018ff" stroke-width="1.300"/><circle cx="14" cy="4" r="2.600" fill="#ffe020" stroke="#f02020" stroke-width="1"/><path d="M14 0v8M10 4h8" stroke="#f08020" stroke-width=".8"/></svg>
<svg style="left:925px;top:720px;width:20px;height:18px" viewBox="0 0 20 18"><rect x="1.600" y="1.600" width="15" height="4" fill="#fff" stroke="#000" stroke-width="1.200"/><path d="M6.500 1.500v4M11.500 1.500v4" stroke="#000" stroke-width="1.200"/><path d="M4 6.500v7M0.800 10h6.500" stroke="#807000" stroke-width="3.200"/><path d="M4 7v6M1.300 10h5.500" stroke="#ffe820" stroke-width="1.800"/><path d="M5 16.500l3-3h9" fill="none" stroke="#000" stroke-width="1"/></svg>
<div class="abs" style="left:935px;top:725px;font-size:8px;line-height:9px;font-weight:bold;font-family:'Liberation Serif',serif">10</div>
<svg style="left:925px;top:793px;width:19px;height:19px" viewBox="0 0 19 19"><defs><radialGradient id="gl" cx="40%" cy="35%" r="70%"><stop offset="0" stop-color="#a0e0a0"/><stop offset=".5" stop-color="#30a060"/><stop offset="1" stop-color="#2060c0"/></radialGradient></defs><circle cx="8" cy="7" r="6.300" fill="url(#gl)" stroke="#305080" stroke-width=".6"/><path d="M4 4c2-1 3 0 4 1s-1 3-3 3zM9 8c2 0 4 1 3 3" fill="#40c040" stroke="none"/><rect x="2.500" y="12.500" width="7" height="4" rx="2" fill="#c8d8f0" stroke="#4060a0" stroke-width="1.300"/><rect x="9" y="12.500" width="7" height="4" rx="2" fill="#c8d8f0" stroke="#4060a0" stroke-width="1.300"/><path d="M7 14.500h5" stroke="#4060a0" stroke-width="1.300"/></svg>
<svg style="left:926px;top:824px;width:16px;height:16px" viewBox="0 0 16 16"><rect x="1.500" y="1.500" width="12" height="13" fill="#fff" stroke="#000"/><rect x="2" y="2" width="11" height="2.500" fill="#2040d0"/><path d="M3 6.500h2M3 8.500h2M3 10.500h2M3 12.500h2" stroke="#000" stroke-width="1.200"/><path d="M6.500 6.500h5.500M6.500 8.500h5.500M6.500 10.500h5.500M6.500 12.500h5.500" stroke="#0030ff" stroke-width="1.200"/></svg>
<!-- ===== property panel ===== -->
<svg style="left:27px;top:927px;width:3px;height:56px" viewBox="0 0 3 56"><path d="M2 1v55" stroke="#fff" stroke-width="2" stroke-dasharray="2 2"/><path d="M1 0v55" stroke="#808080" stroke-width="2" stroke-dasharray="2 2"/></svg>
<div class="abs" style="left:32px;top:927px;width:1642px;height:35px;border:1px solid #808080;border-bottom:1px solid #000;background:linear-gradient(180deg,#fcfcfb 0%,#efeeea 35%,#e2e0da 70%,#d8d5ce 100%);box-shadow:inset 1px 1px 0 #fff,inset -1px 0 0 #fff"></div>
<div class="abs" style="left:32px;top:962px;width:1643px;height:23px;background:linear-gradient(180deg,#fff 0%,#f1f0ed 35%,#dad7d0 80%,#ccc8be 100%)"></div>

<!-- ===== status bar ===== -->
<div class="abs" style="left:4px;top:989px;width:1590px;height:17px;border:1px solid #848484"></div>
<div class="abs" style="left:1596px;top:989px;width:84px;height:17px;border:1px solid #848484;border-right:0"></div>
<div class="abs" id="stxt" style="left:6px;top:992px;font-size:11px;line-height:13px;white-space:nowrap">Скопировать выделенные объекты в буфер обмена</div>

<!-- ===== taskbar ===== -->
<style>
#task{position:absolute;left:0;top:1007px;width:1680px;height:43px;background:linear-gradient(180deg,#a8a6a0 0,#a8a6a0 1px,#6e6d6a 1px,#6e6d6a 2px,#404040 2px,#404040 3px,#d4d0c8 3px)}
.tkb{position:absolute;top:1010px;height:38px;width:48px;border:1px solid;border-color:#fff #404040 #404040 #fff;box-shadow:inset -1px -1px 0 #808080;background:#d4d0c8}
.tkb.on{border-color:#404040 #fff #fff #404040;box-shadow:inset 1px 1px 0 #808080;background:#fff}
</style>
<div id="task"></div>
<div class="tkb" style="left:2px;width:51px"></div>
<svg style="left:5px;top:1019px;width:20px;height:20px" viewBox="0 0 20 20"><path d="M2 4.500c2-1.500 4-1.500 6.500 0l-1.500 5c-2.500-1.500-4.500-1.500-6.500 0z" fill="#e8502c"/><path d="M10 5c2 1.200 4 1.200 6.500-.3l-1.500 5c-2.500 1.500-4.500 1.500-6.500.3z" fill="#7cc040"/><path d="M0.300 11c2-1.500 4-1.500 6.500 0l-1.500 5c-2.500-1.500-4.500-1.500-6.500 0z" fill="#3c8ce0"/><path d="M8 11.500c2 1.200 4 1.200 6.500-.3l-1.500 5c-2.500 1.500-4.500 1.500-6.500.3z" fill="#f8c020"/></svg>
<div class="abs" style="left:21px;top:1021px;font-size:12px;line-height:15px;font-weight:bold;white-space:nowrap;letter-spacing:-.2px">Пуск</div>
<!-- punto -->
<svg style="left:70px;top:1013px;width:32px;height:32px" viewBox="0 0 32 32"><rect width="32" height="32" rx="5" fill="#000"/><ellipse cx="16" cy="16" rx="11.500" ry="11" fill="#fff"/><circle cx="11.300" cy="15.800" r="3.300" fill="#000"/><circle cx="20.700" cy="15.800" r="3.300" fill="#000"/><circle cx="12.300" cy="14.600" r="1.200" fill="#fff"/><circle cx="21.700" cy="14.600" r="1.200" fill="#fff"/></svg>
<!-- IE -->
<svg style="left:119px;top:1011px;width:36px;height:36px" viewBox="0 0 36 36"><defs><linearGradient id="ieg" x1="0" y1="0" x2="0" y2="1"><stop offset="0" stop-color="#7ad8fa"/><stop offset=".5" stop-color="#46b4f0"/><stop offset="1" stop-color="#1c84d8"/></linearGradient></defs><path d="M18.500 5.500c-8 0-13.500 5.500-13.500 13.500s5.500 13 13.500 13c6 0 10.500-3.500 12-8h-7c-1 1.500-2.800 2.500-5 2.500-3.800 0-6-2.500-6.300-5.500h19c.6-9-4.500-15.500-12.700-15.500zM12.300 16c.6-3 3-4.800 6.200-4.800s5.600 1.800 6.200 4.800z" fill="url(#ieg)" stroke="#2080d0" stroke-width=".5"/><path d="M3.500 30c-3.500-5.500 1.500-15.500 10.500-22 7.500-5.500 16-7.500 18.500-4 1.500 2 1 5-1 8.500.8-3 .8-5-.3-6.200-2.200-2.500-8.700-.8-15.200 4-8.500 6.500-12.700 14-10.700 18 1 2 3.500 2.700 7.200 1.700-4.300 2.300-7.600 2.200-9 0z" fill="#fcc830" stroke="#e8a818" stroke-width=".5"/></svg>
<!-- explorer -->
<div class="tkb" style="left:162px"></div>
<svg style="left:170px;top:1013px;width:33px;height:33px" viewBox="0 0 33 33"><path d="M1.500 28V5.500c0-1 .5-1.500 1.500-1.500h7l2 2h18c1 0 1.500.5 1.500 1.500V28z" fill="#f0d878" stroke="#c8a840" stroke-width="1"/><rect x="4" y="3" width="9" height="4" fill="#fff" stroke="#c0c0c0" stroke-width=".5"/><rect x="5" y="3.500" width="3" height="1.500" fill="#20b030"/><rect x="13" y="5" width="9" height="4" fill="#fff" stroke="#c0c0c0" stroke-width=".5"/><rect x="14" y="5.500" width="3" height="1.500" fill="#e03020"/><rect x="21" y="7" width="8" height="4" fill="#fff" stroke="#c0c0c0" stroke-width=".5"/><rect x="22" y="7.500" width="3" height="1.500" fill="#2080e0"/><path d="M1.500 29V11h30v18z" fill="#f8e498" stroke="#d0b048" stroke-width="1"/><path d="M7 31.500v-9c0-2 1-3 3-3h13c2 0 3 1 3 3v9h-5v-6h-9v6z" fill="#90d0f0" stroke="#4898c8" stroke-width="1"/><path d="M9 22h15" stroke="#d8f0ff" stroke-width="2"/></svg>
<!-- chrome -->
<div class="tkb" style="left:212px"></div>
<svg style="left:221px;top:1014px;width:30px;height:30px" viewBox="0 0 30 30"><circle cx="15" cy="15" r="14" fill="#e23a2c"/><path d="M2.900 8A14 14 0 0 0 13.500 28.900L19 19 9 19z" fill="#3aa84c"/><path d="M13.500 28.900A14 14 0 0 0 27.100 8H15l6 7z" fill="#f9ca24"/><circle cx="15" cy="15" r="6.600" fill="#f4f4f4"/><circle cx="15" cy="15" r="5.200" fill="#3f86e4"/></svg>
<!-- yandex -->
<svg style="left:270px;top:1014px;width:32px;height:31px" viewBox="0 0 32 31"><path d="M3 1h19l9 14.500L22 30H3c-1.500 0-2.500-1-2.500-2.500v-24C.5 2 1.500 1 3 1z" fill="#f4f4f4" stroke="#c8c8c8" stroke-width="1"/></svg>
<div class="abs" style="left:277px;top:1013px;font-size:31px;line-height:33px;font-weight:bold;color:#f01818;transform:scaleX(.68);transform-origin:0 0">Я</div>
<!-- floppy -->
<svg style="left:320px;top:1013px;width:32px;height:32px" viewBox="0 0 32 32"><path d="M1 2.500c0-1 .5-1.500 1.500-1.500h27c1 0 1.500.5 1.500 1.500v27c0 1-.5 1.500-1.500 1.500h-25l-3.500-3.500z" fill="#9058b0" stroke="#6c3c8c" stroke-width="1"/><rect x="5" y="1.500" width="22" height="14.500" fill="#f4f4f8"/><path d="M6 5h20M6 8h20M6 11h20M6 14h20" stroke="#d0d0dc" stroke-width="1"/><rect x="8" y="20" width="18" height="11" fill="#c0c0c8" stroke="#70707c" stroke-width="1"/><rect x="11" y="21" width="5" height="9" fill="#7c4c9c"/></svg>
<!-- skype -->
<div class="tkb" style="left:362px"></div>
<svg style="left:370px;top:1012px;width:33px;height:34px" viewBox="0 0 33 34"><defs><linearGradient id="skg" x1="0" y1="0" x2="0" y2="1"><stop offset="0" stop-color="#50c8f8"/><stop offset="1" stop-color="#08a0e8"/></linearGradient></defs><circle cx="9.500" cy="10" r="9" fill="url(#skg)"/><circle cx="23" cy="24" r="9" fill="url(#skg)"/><circle cx="16.500" cy="17" r="13.500" fill="url(#skg)"/></svg>
<div class="abs" style="left:377px;top:1013px;font-size:31px;line-height:34px;font-weight:bold;color:#fff">S</div>
<!-- kompas (active) -->
<div class="tkb on" style="left:412px"></div>
<svg style="left:420px;top:1011px;width:33px;height:33px" viewBox="0 0 33 33"><defs><linearGradient id="kpg" x1="0" y1="0" x2="0" y2="1"><stop offset="0" stop-color="#2c94ea"/><stop offset="1" stop-color="#155eb4"/></linearGradient></defs><circle cx="16" cy="16.500" r="13.200" fill="#fff" stroke="url(#kpg)" stroke-width="3.200"/><path d="M8 8.600H23.500" stroke="#2688de" stroke-width="1.800"/><path d="M9.700 8.500V26.500" stroke="#1e78d0" stroke-width="3.200"/><path d="M23.500 8L11 17.800" stroke="#2484da" stroke-width="3"/><path d="M11.500 17L27.500 30.500" stroke="#fff" stroke-width="6"/><path d="M11.500 17L27 30" stroke="#1a6cc4" stroke-width="3.200"/></svg>
<!-- paint -->
<div class="tkb" style="left:462px"></div>
<svg style="left:468px;top:1012px;width:38px;height:35px" viewBox="0 0 38 35"><path d="M5 20c0-7 7-13 16-13 7 0 11 4 11 8s-3 5-6 5-4 2-3 4 0 6-6 6c-7 0-12-4-12-10z" fill="#b8d8f0" stroke="#6090b8" stroke-width="1.200"/><circle cx="11" cy="19" r="2.800" fill="#e04030"/><circle cx="16" cy="13.500" r="2.800" fill="#50b040"/><circle cx="23" cy="11.500" r="2.800" fill="#f0c020"/><circle cx="13" cy="25" r="2.500" fill="#e8f0f8"/><path d="M20 33L31 8l2.500 1z" fill="#e89030" stroke="#a86010" stroke-width=".8"/><path d="M30.500 9l1-6.500c1.500-1 3.500-.5 4.500 1L33.500 10z" fill="#d8b080" stroke="#907040" stroke-width=".8"/></svg>
<!-- word -->
<div class="tkb" style="left:511px"></div>
<svg style="left:518px;top:1012px;width:36px;height:35px" viewBox="0 0 36 35"><rect x="2" y="2" width="27" height="30" fill="#fff" stroke="#3060b8" stroke-width="1.600"/><rect x="3" y="3" width="25" height="27" fill="#dce8f8"/><path d="M3 3h25v10l-25 9z" fill="#b8d0f4"/><path d="M5 27h20M5 29.500h20M5 24.500h20" stroke="#a8c0e8" stroke-width="1"/><path d="M22 17l12-3v12l-12 3z" fill="#f8f8fc" stroke="#c8d0e0" stroke-width=".8"/></svg>
<div class="abs" style="left:522px;top:1010px;font-size:27px;line-height:30px;font-weight:bold;color:#1c50b0;letter-spacing:-1px">W</div>
<!-- tray -->
<div class="abs" style="left:1344px;top:1021px;font-size:11px;line-height:13px">RU</div>
<div class="abs" style="left:1364px;top:1016px;width:2px;height:22px;border-left:1px solid #808080;border-right:1px solid #fff"></div>
<div class="abs" style="left:1368px;top:1010px;width:309px;height:38px;border:1px solid;border-color:#808080 #fff #fff #808080"></div>
<!-- tray icons -->
<svg style="left:1374px;top:1021px;width:17px;height:17px" viewBox="0 0 17 17"><path d="M1 8.500h15M4 3l9 11M13 3L4 14" stroke="#b8b8b8" stroke-width="1.200"/><circle cx="8.500" cy="8.500" r="3.200" fill="#e04030" stroke="#a02010" stroke-width=".8"/><circle cx="1.500" cy="8.500" r="1.300" fill="#d0d0d0"/><circle cx="15.500" cy="8.500" r="1.300" fill="#d0d0d0"/><circle cx="4" cy="3" r="1.300" fill="#d0d0d0"/><circle cx="13" cy="14" r="1.300" fill="#d0d0d0"/></svg>
<div class="abs" style="left:1399px;top:1021px;width:16px;height:16px;border-radius:3px;background:#fff;border:1px solid #d8dce4;color:#4068a0;font-weight:bold;font-size:12px;line-height:14px;text-align:center">В</div>
<svg style="left:1422px;top:1020px;width:18px;height:18px" viewBox="0 0 18 18"><path d="M2 7.500c0-4 3-6.500 7-6.500s7 2.500 7 6.500-3 6.500-6 6.500c0 1.500 1 2.500 2 3-3 0-5-1.500-5.500-3.500-3-.5-4.500-3-4.500-6z" fill="#68c020" stroke="#48a000" stroke-width=".6"/><path d="M5.500 7.500l2.500 2.500 4.500-5" fill="none" stroke="#fff" stroke-width="2"/></svg>
<svg style="left:1447px;top:1020px;width:17px;height:18px" viewBox="0 0 17 18"><path d="M2 1v16" stroke="#606060" stroke-width="1.600"/><path d="M3 2.500c3-2 5 1 8 0s4-1.500 5-1c-1 3-1 5-2 7-2 1-4-1-6 0s-3 1-5 1z" fill="#fff" stroke="#707070" stroke-width="1"/></svg>
<svg style="left:1470px;top:1020px;width:18px;height:18px" viewBox="0 0 18 18"><rect x="3.500" y="1" width="6" height="5" fill="#909090" stroke="#505050" stroke-width=".8"/><path d="M2 6h9v5c0 2-1.500 3-3 3v3.500h-3v-3.500c-1.500 0-3-1-3-3z" fill="#808080" stroke="#404040" stroke-width=".8"/><circle cx="12.500" cy="12.500" r="4.800" fill="#20a030" stroke="#107020" stroke-width=".6"/><path d="M10 12.500l2 2 3-4" fill="none" stroke="#fff" stroke-width="1.600"/></svg>
<svg style="left:1494px;top:1020px;width:18px;height:18px" viewBox="0 0 18 18"><rect x="0.500" y="1.500" width="14" height="14" fill="#f0f0f0" stroke="#d0d0d0"/><path d="M3 13l6-8v8z" fill="#707070"/><path d="M2.500 13.500l6-3" stroke="#909090"/><path d="M11 3v6M11 3l3 1.500" stroke="#f08000" stroke-width="1.300" fill="none"/><circle cx="10" cy="9.500" r="1.500" fill="#f08000"/><rect x="15" y="15" width="1.500" height="1.500" fill="#404040"/></svg>
<svg style="left:1518px;top:1020px;width:17px;height:17px" viewBox="0 0 17 17"><path d="M1 1h4.500v6L10 1h5.500L10 8l6 8h-5.500L5.500 9.500V16H1z" fill="#e81020"/><path d="M8 9l8 7v-5z" fill="#000"/><path d="M9 10.500l4.500 1" stroke="#fff" stroke-width="1.200"/></svg>
<svg style="left:1542px;top:1020px;width:18px;height:18px" viewBox="0 0 18 18"><rect x="5.500" y="4.500" width="10" height="9" fill="#e8e8e8" stroke="#404040" stroke-width="1.300"/><rect x="7.500" y="6.500" width="6" height="5" fill="#b8b8b8"/><path d="M6 16.500h9M10.500 14v2.500" stroke="#404040" stroke-width="1.300"/><path d="M2.500 1v5h4v-5M4.500 1v11" fill="none" stroke="#404040" stroke-width="1.300"/></svg>
<svg style="left:1566px;top:1020px;width:18px;height:18px" viewBox="0 0 18 18"><path d="M1.500 6.500h3l4-4v13l-4-4h-3z" fill="#f4f4f4" stroke="#707070" stroke-width="1"/><path d="M11 6c1 1 1 5 0 6M13 4c2 2 2 8 0 10M15 2.500c2.500 3 2.500 10 0 13" fill="none" stroke="#909090" stroke-width="1"/></svg>
<div class="abs" style="left:1594px;top:1015px;width:60px;text-align:center;font-size:11px;line-height:13px">21:45</div>
<div class="abs" style="left:1594px;top:1031px;width:60px;text-align:center;font-size:11px;line-height:13px">06.11.2012</div>
<svg style="left:1660px;top:1023px;width:16px;height:13px" viewBox="0 0 16 13"><defs><linearGradient id="dsk" x1="0" y1="0" x2="1" y2="1"><stop offset="0" stop-color="#1858c8"/><stop offset="1" stop-color="#68b0f0"/></linearGradient></defs><rect x="0.500" y="0.500" width="15" height="10" fill="url(#dsk)" stroke="#4070b0"/><rect x="0" y="10" width="16" height="3" fill="#283850"/><rect x="1" y="10.500" width="3" height="2" fill="#60a0e0"/></svg>
</body>
</html>
